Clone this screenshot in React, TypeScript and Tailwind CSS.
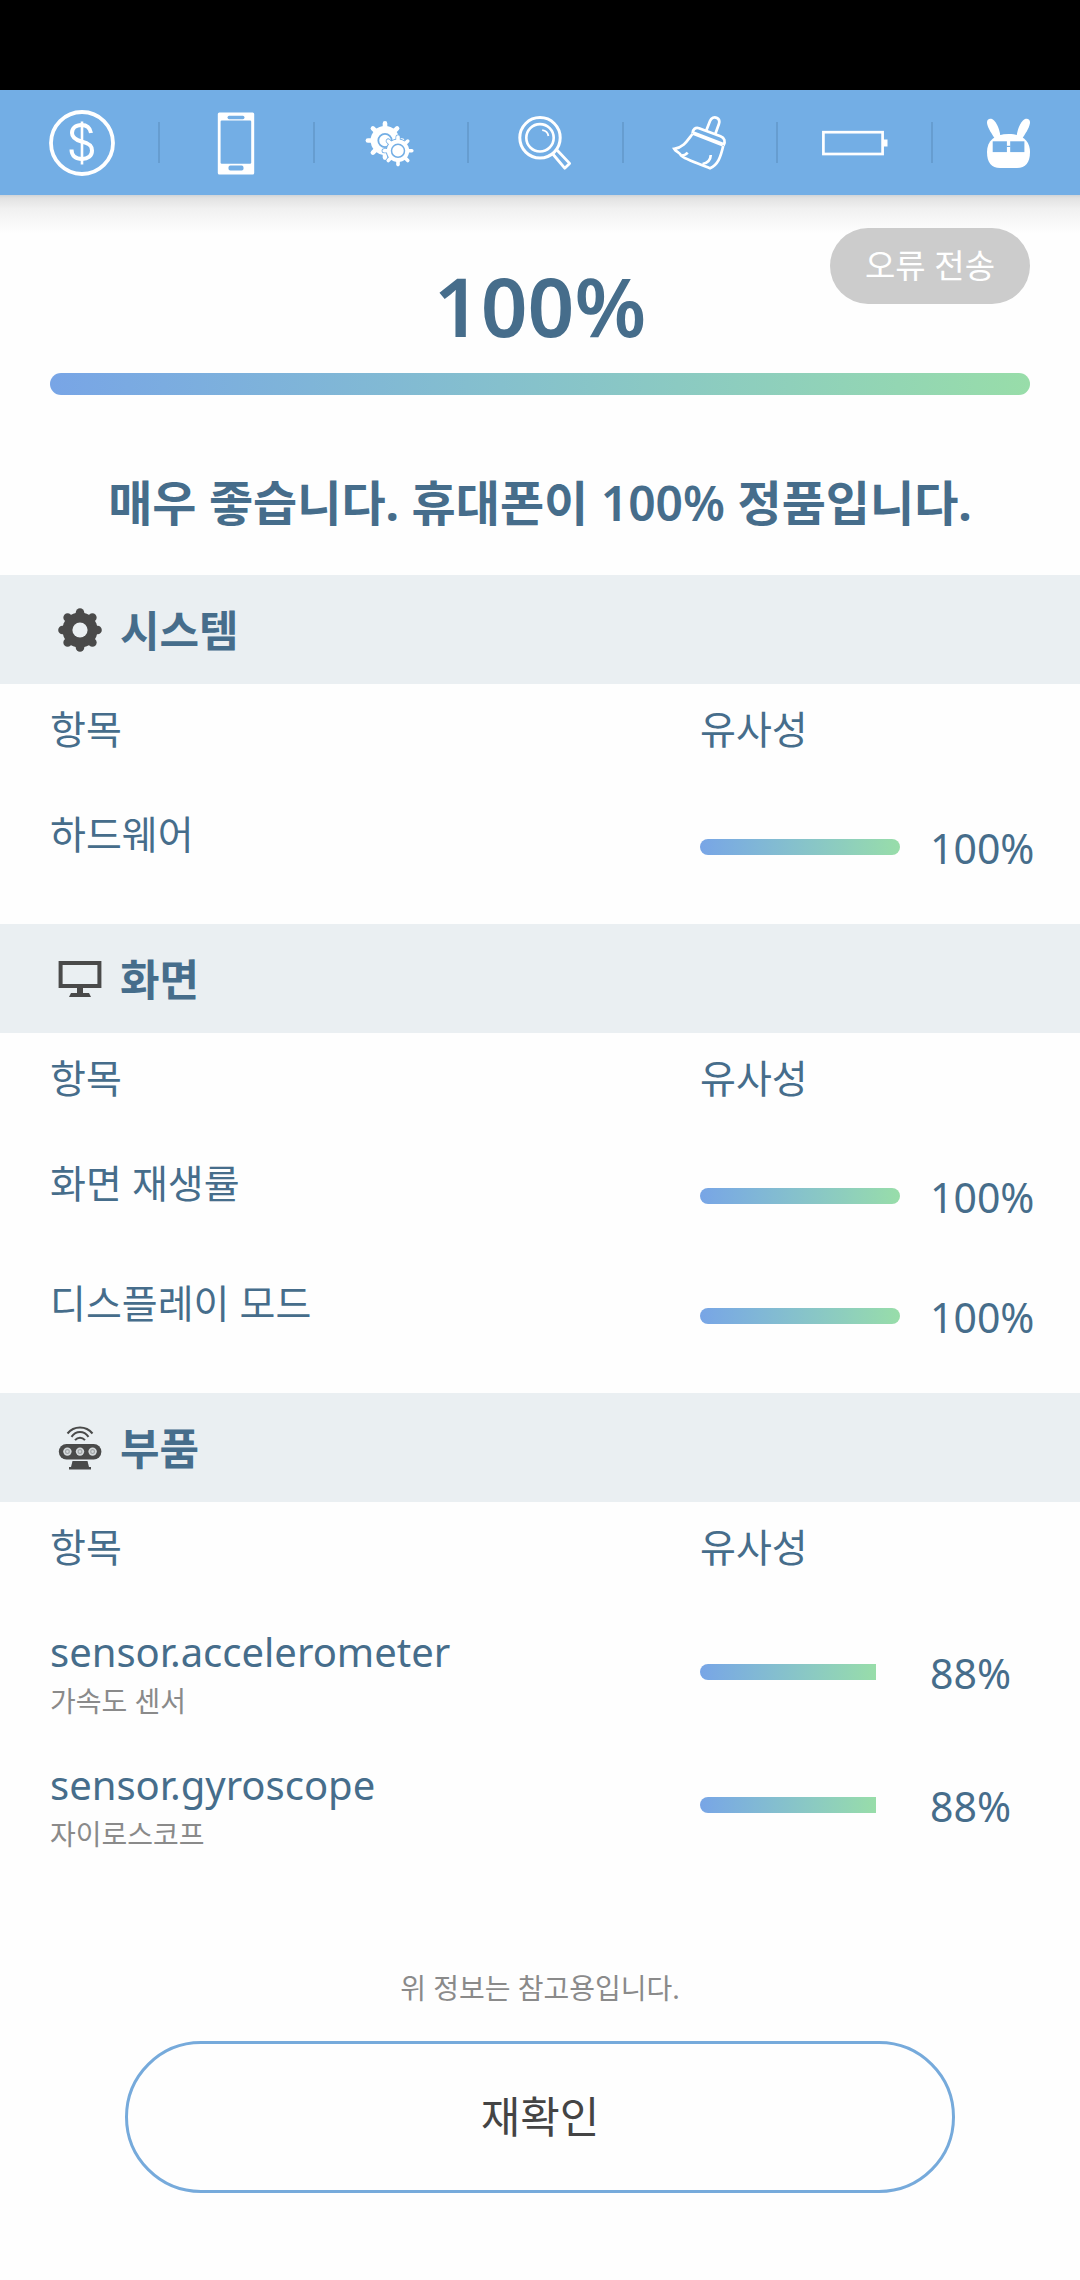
import React from 'react';

type Item = { name: string; note?: string; score: number };
type Section = { title: string; icon: React.ReactNode; items: Item[] };

const TEETH = [0, 45, 90, 135, 180, 225, 270, 315];

const Gear: React.FC<{ cx: number; cy: number; body: number; outer: number; tooth: number }> = ({
  cx,
  cy,
  body,
  outer,
  tooth,
}) => (
  <g>
    <circle cx={cx} cy={cy} r={body} fill="currentColor" stroke="none" />
    {TEETH.map((deg) => (
      <line
        key={deg}
        x1={cx}
        y1={cy}
        x2={cx}
        y2={cy - outer + tooth / 2}
        transform={`rotate(${deg} ${cx} ${cy})`}
        stroke="currentColor"
        strokeWidth={tooth}
        strokeLinecap="round"
      />
    ))}
  </g>
);

const DollarIcon = () => (
  <>
    <circle cx="33" cy="33" r="31" strokeWidth="3.8" />
    <path
      d="M42 23C41 17.5 37.5 15 32.5 15C26.5 15 23 18.5 23 23C23 28 27 30 32.5 31.5C39 33 43 35 43 40.5C43 46 39 49 33 49C27 49 22.5 46 22.5 39.5"
      strokeWidth="4"
    />
    <path d="M33 11.5V54.5" strokeWidth="2.6" />
  </>
);

const PhoneIcon = () => (
  <>
    <rect x="13.8" y="2.5" width="36.4" height="62" rx="1.5" fill="currentColor" stroke="none" />
    <g fill="#73aee5" stroke="none">
      <rect x="16.6" y="10.5" width="30.6" height="43.3" rx="1.2" />
      <rect x="23.5" y="5.8" width="17" height="3.4" rx="1.7" />
      <rect x="24.5" y="55.6" width="15" height="5" rx="1.8" />
    </g>
  </>
);

const GearsIcon = () => (
  <>
    <Gear cx={27} cy={30.5} body={14.4} outer={19.4} tooth={4.6} />
    <circle cx="27" cy="30.5" r="6.7" stroke="#73aee5" strokeWidth="1.8" />
    <g className="text-[#73aee5]">
      <Gear cx={40} cy={40.8} body={12.2} outer={16.4} tooth={5} />
    </g>
    <Gear cx={40} cy={40.8} body={11.2} outer={15.6} tooth={3.6} />
    <circle cx="40" cy="40.8" r="6.5" stroke="#73aee5" strokeWidth="1.5" />
  </>
);

const SearchIcon = () => (
  <>
    <circle cx="27" cy="27.8" r="20.2" strokeWidth="3" />
    <circle cx="27" cy="27.8" r="13.7" strokeWidth="2.6" />
    <path d="M29.2 20.2C32.7 20.6 34.9 22.7 35.4 26" strokeWidth="1.8" />
    <path d="M39.8 44L51.7 58.2L56.6 53.4L44.2 40.2" strokeWidth="2.8" strokeLinejoin="round" />
  </>
);

const BroomIcon = () => (
  <>
    <path d="M39.2 20.8L43 11C44.3 7.7 47.3 6.7 50 8C52.2 9.2 52.8 11.4 51.9 14L48.3 24" strokeWidth="2.7" />
    <path
      d="M25.5 23.5C25.5 19.5 28.5 17 32 18.2L53.5 26.2C57.5 27.8 58.8 31.5 56.5 35.5"
      strokeWidth="2.7"
    />
    <path d="M26 23L56 34.6" strokeWidth="4" />
    <path
      d="M25.5 24C21 29.5 17 37.5 7.2 38.8C9 42 13 42.5 13.8 45.2C14.5 48 29 52.5 43 58.3C51 54.5 53.5 47.5 56.2 36"
      strokeWidth="2.7"
    />
    <path d="M20.7 42.6C18.5 45 17 45.6 14.5 45.6M43.8 45C43.5 49.5 41.5 53 35.5 54" strokeWidth="2.7" />
  </>
);

const BatteryIcon = () => (
  <>
    <rect x="1.4" y="22.2" width="59.2" height="21.8" strokeWidth="2.7" />
    <rect x="60.5" y="29.5" width="5" height="7" fill="currentColor" stroke="none" />
  </>
);

const RabbitIcon = () => (
  <g stroke="none">
    <g fill="currentColor">
      <path d="M24.5 27L18.6 28.2C14 21.5 11 16 11 12.3C11 9.6 13 8.2 15.4 8.8C19.3 10 23.5 17.5 24.5 27Z" />
      <path d="M40.5 27L46.4 28.2C51 21.5 54 16 54 12.3C54 9.6 52 8.2 49.6 8.8C45.7 10 41.5 17.5 40.5 27Z" />
      <path d="M32.5 24C46 24 54 30.5 54 42C54 52.5 49.5 58 41 58H24C15.5 58 11 52.5 11 42C11 30.5 19 24 32.5 24Z" />
    </g>
    <g fill="#73aee5">
      <rect x="16.7" y="31.3" width="14.2" height="10.8" />
      <rect x="34.2" y="31.3" width="14.2" height="10.8" />
      <rect x="30.5" y="35.8" width="4" height="1.2" />
    </g>
  </g>
);

const tabs = [
  { label: 'price', Icon: DollarIcon },
  { label: 'phone', Icon: PhoneIcon },
  { label: 'settings', Icon: GearsIcon },
  { label: 'search', Icon: SearchIcon },
  { label: 'clean', Icon: BroomIcon },
  { label: 'battery', Icon: BatteryIcon },
  { label: 'rabbit', Icon: RabbitIcon },
];

const SystemIcon = () => (
  <>
    <Gear cx={22} cy={22} body={17.6} outer={21.8} tooth={8.5} />
    <circle cx="22" cy="22" r="7.6" fill="#eaeff2" />
  </>
);

const ScreenIcon = () => (
  <>
    <rect x="2.6" y="6" width="38.8" height="23" fill="none" stroke="currentColor" strokeWidth="4" />
    <path d="M19 31H25V36H31L33 40H11L13 36H19Z" fill="currentColor" />
  </>
);

const PartsIcon = () => (
  <>
    <g fill="none" stroke="currentColor" strokeWidth="2">
      <path d="M9.5 7.5C16 -0.5 28 -0.5 34.5 7.5" />
      <path d="M13.5 10.8C18 4.5 26 4.5 30.5 10.8" />
      <path d="M17 14.2C20 10.8 24 10.8 27 14.2" />
    </g>
    <rect x="0.8" y="18" width="42.6" height="15.5" rx="7.7" fill="currentColor" />
    <g fill="#d5d9db">
      <circle cx="9.4" cy="25.6" r="4.2" />
      <circle cx="22" cy="25.6" r="4.2" />
      <circle cx="34.6" cy="25.6" r="4.2" />
    </g>
    <g fill="none" stroke="#a3a6a8" strokeWidth="1.2">
      <circle cx="9.4" cy="25.6" r="1.9" />
      <circle cx="22" cy="25.6" r="1.9" />
      <circle cx="34.6" cy="25.6" r="1.9" />
    </g>
    <path d="M14.5 35H29.5L31 41H33V43.5H11V41H13Z" fill="currentColor" />
  </>
);

const sections: Section[] = [
  { title: '시스템', icon: <SystemIcon />, items: [{ name: '하드웨어', score: 100 }] },
  {
    title: '화면',
    icon: <ScreenIcon />,
    items: [
      { name: '화면 재생률', score: 100 },
      { name: '디스플레이 모드', score: 100 },
    ],
  },
  {
    title: '부품',
    icon: <PartsIcon />,
    items: [
      { name: 'sensor.accelerometer', note: '가속도 센서', score: 88 },
      { name: 'sensor.gyroscope', note: '자이로스코프', score: 88 },
    ],
  },
];

const ScoreBar: React.FC<{ score: number }> = ({ score }) => (
  <div className="w-[200px] h-4 rounded-full overflow-hidden">
    <div className="h-full bg-linear-to-r from-[#78a5e6] to-[#98dda9]" style={{ width: `${score}%` }} />
  </div>
);

const SectionTable: React.FC<Section> = ({ title, icon, items }) => (
  <section>
    <div className="h-[109px] bg-[#eaeff2] flex items-center gap-[18px] px-[58px]">
      <svg viewBox="0 0 44 44" className="size-11 text-[#4a4a4a]" aria-hidden="true">
        {icon}
      </svg>
      <h2 className="pt-0.5 text-[43px] leading-[60px] font-bold">{title}</h2>
    </div>
    <table className="w-full table-fixed text-left text-[39px] leading-[50px]">
      <thead>
        <tr className="h-[90px]">
          <th className="pl-[50px] font-normal">항목</th>
          <th className="w-[380px] font-normal">유사성</th>
        </tr>
      </thead>
      <tbody>
        {items.map(({ name, note, score }) => (
          <tr key={name} className={note ? 'h-[133px] text-[40px]' : 'h-[120px]'}>
            <td className={note ? 'pl-[50px] pt-[30px]' : 'pl-[50px]'}>
              {name}
              {note && <div className="mt-1 text-[28px] leading-10 text-[#8a8a8a]">{note}</div>}
            </td>
            <td className="pt-[26px]">
              <div className="flex items-center gap-[30px]">
                <ScoreBar score={score} />
                <span className="pt-0.5 text-[41px]">{score}%</span>
              </div>
            </td>
          </tr>
        ))}
      </tbody>
    </table>
  </section>
);

export default function App() {
  return (
    <div className="min-h-screen bg-[#fefefe] text-[#466d8b] font-['Noto_Sans','Noto_Sans_CJK_KR',sans-serif]">
      <div className="h-[90px] bg-black" />
      <nav className="h-[105px] bg-[#73aee5] flex items-center justify-between pl-[49px] pr-[38px]">
        {tabs.map(({ label, Icon }, i) => (
          <React.Fragment key={label}>
            {i > 0 && <span className="w-0.5 h-[41px] bg-[#669dd0]" />}
            <button aria-label={label} className="size-[66px] text-white">
              <svg viewBox="0 0 66 66" fill="none" stroke="currentColor" className="size-full">
                <Icon />
              </svg>
            </button>
          </React.Fragment>
        ))}
      </nav>

      <main>
        <section className="relative px-[50px] pt-[60px] pb-[42px] text-center bg-[linear-gradient(#d0d4d7,#e2e2e2_3px,#f1f1f1_14px,#fefefe_38px)]">
          <button className="absolute right-[50px] top-[33px] w-[200px] h-[76px] rounded-full bg-[#cccccc] text-white text-[33px]">
            오류 전송
          </button>
          <h1 className="text-[82px] leading-[100px] font-semibold">100%</h1>
          <div className="mt-[18px] h-[22px] rounded-full bg-linear-to-r from-[#78a5e6] to-[#98dda9]" />
          <p className="mt-[78px] text-[48px] leading-[60px] font-bold">
            매우 좋습니다. 휴대폰이 <span className="font-semibold">100%</span> 정품입니다.
          </p>
        </section>

        {sections.map((section, i) => (
          <div key={section.title} className={i < sections.length - 1 ? 'pb-[30px]' : ''}>
            <SectionTable {...section} />
          </div>
        ))}

        <div className="px-[125px] pt-[110px] pb-[87px] text-center">
          <p className="text-[28px] leading-10 text-[#8a8a8a]">위 정보는 참고용입니다.</p>
          <button className="mt-[33px] w-full h-[152px] rounded-full border-3 border-[#76aadb] text-[43px] text-[#444444]">
            재확인
          </button>
        </div>
      </main>
    </div>
  );
}
